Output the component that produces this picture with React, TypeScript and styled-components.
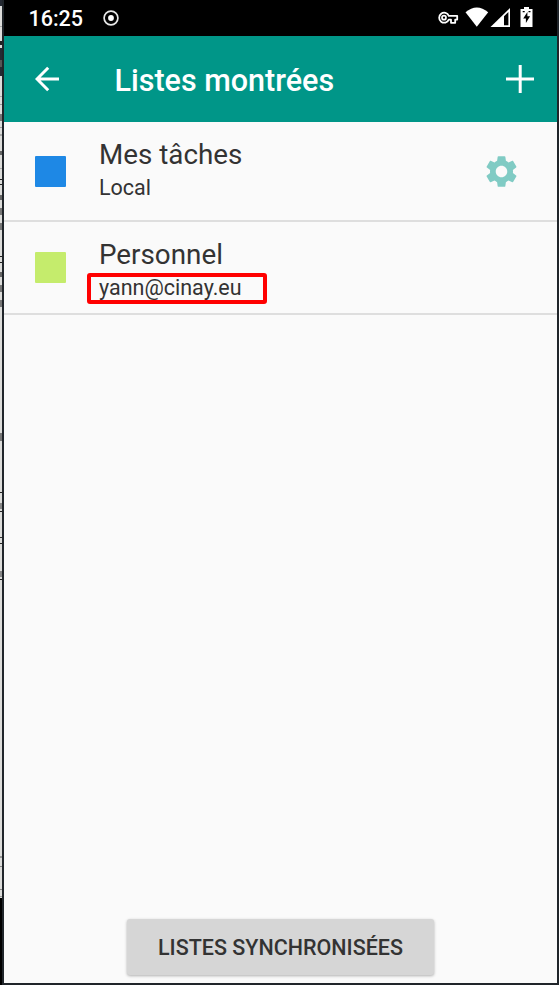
import React from "react";
import styled, { createGlobalStyle } from "styled-components";

const GlobalStyle = createGlobalStyle`
  *, *::before, *::after { box-sizing: border-box; }
  html, body, #root { margin: 0; height: 100%; }
  body { background: #20252a; overflow: hidden; font-family: Roboto, "Liberation Sans", sans-serif; }
`;

const Desktop = styled.div`
  display: flex;
  width: 559px;
  height: 985px;
  overflow: hidden;
  background: #20252a;
`;

const BackgroundEdge = styled.svg`
  flex: none;
  display: block;
  width: 2px;
  height: 985px;
`;

const Phone = styled.main`
  display: flex;
  flex-direction: column;
  width: 553px;
  height: 983px;
  margin-left: 2px;
  background: #fafafa;
`;

const StatusBar = styled.div`
  flex: none;
  display: flex;
  align-items: center;
  height: 36px;
  padding: 0 23px 0 24.5px;
  background: #000;
  color: #fff;
`;

const Clock = styled.span`
  width: 74.5px;
  font-size: 21.5px;
  font-weight: 500;
  line-height: 37px;
  white-space: nowrap;
`;

const StatusIcons = styled.svg`
  display: block;
  margin-left: auto;
`;

const AppBar = styled.header`
  flex: none;
  display: flex;
  align-items: center;
  height: 86px;
  padding: 0 23px 0 31px;
  background: #009688;
  color: #fff;
`;

const Title = styled.h1`
  margin: 3px 0 0 53.5px;
  font-size: 30.5px;
  font-weight: 500;
  line-height: 36px;
  white-space: nowrap;
`;

const IconButton = styled.button<{ $push?: boolean }>`
  flex: none;
  display: block;
  margin: 0 0 0 ${(p) => (p.$push ? "auto" : "0")};
  padding: 0;
  border: 0;
  background: none;
  color: inherit;
  svg { display: block; }
`;

const Lists = styled.ul`
  flex: 1;
  margin: 0;
  padding: 0;
  list-style: none;
`;

const ListRow = styled.li<{ $height: number }>`
  display: flex;
  align-items: center;
  height: ${(p) => p.$height}px;
  padding: 0 40px 0 31px;
  border-bottom: 2px solid #dedede;
  color: #333;
`;

const Swatch = styled.span<{ $color: string }>`
  flex: none;
  width: 30.5px;
  height: 31px;
  margin-right: 33.5px;
  border-radius: 1px;
  background: ${(p) => p.$color};
`;

const Labels = styled.div<{ $top: number }>`
  align-self: flex-start;
  display: flex;
  flex-direction: column;
  padding-top: ${(p) => p.$top}px;
`;

const ListName = styled.span`
  font-size: 27.8px;
  line-height: 36px;
  white-space: nowrap;
`;

const Account = styled.span<{ $marked?: boolean }>`
  width: ${(p) => (p.$marked ? "180px" : "auto")};
  height: 31px;
  margin-left: ${(p) => (p.$marked ? "-12px" : "0")};
  padding-left: ${(p) => (p.$marked ? "8px" : "0")};
  border: ${(p) => (p.$marked ? "4px solid #f00" : "0")};
  border-radius: 3px;
  font-size: 21.5px;
  line-height: ${(p) => (p.$marked ? "21px" : "30px")};
  white-space: nowrap;
`;

const Footer = styled.footer`
  flex: none;
  display: flex;
  justify-content: center;
  height: 64.5px;
`;

const SyncButton = styled.button`
  width: 306.5px;
  height: 56px;
  padding: 0;
  border: 0;
  border-radius: 3px;
  background: #d6d6d6;
  box-shadow: 0 1px 3px rgba(0, 0, 0, 0.3);
  color: #333;
  font-family: inherit;
  font-size: 21.5px;
  font-weight: 500;
  line-height: 57px;
  white-space: nowrap;
`;

const edgeMarks: Array<[number, number, string]> = [
  [26, 1, "#aaa"], [41, 4, "#222"], [60, 7, "#555"], [96, 1, "#aaa"], [104, 1, "#999"],
  [114, 7, "#777"], [127, 1, "#999"], [134, 2, "#aaa"], [151, 4, "#666"], [168, 1, "#aaa"],
  [179, 1, "#222"], [184, 1, "#222"], [195, 5, "#666"], [208, 7, "#777"], [223, 7, "#777"],
  [256, 1, "#222"], [262, 1, "#222"], [272, 5, "#666"], [285, 7, "#777"], [300, 7, "#777"],
  [433, 8, "#777"], [492, 1, "#222"], [503, 6, "#888"], [511, 1, "#222"], [537, 1, "#333"],
  [543, 1, "#222"], [571, 6, "#888"], [579, 1, "#222"], [856, 2, "#999"], [866, 1, "#888"],
  [889, 1, "#888"], [896, 1, "#999"],
];

const gearPath =
  "M19.14 12.94c.04-.3.06-.61.06-.94 0-.32-.02-.64-.07-.94l2.03-1.58c.18-.14.23-.41.12-.61l-1.92-3.32c-.12-.22-.37-.29-.59-.22l-2.39.96c-.5-.38-1.03-.7-1.62-.94l-.36-2.54c-.04-.24-.24-.41-.48-.41h-3.84c-.24 0-.43.17-.47.41l-.36 2.54c-.59.24-1.13.57-1.62.94l-2.39-.96c-.22-.08-.47 0-.59.22L2.74 8.87c-.12.21-.08.47.12.61l2.03 1.58c-.05.3-.09.63-.09.94s.02.64.07.94l-2.03 1.58c-.18.14-.23.41-.12.61l1.92 3.32c.12.22.37.29.59.22l2.39-.96c.5.38 1.03.7 1.62.94l.36 2.54c.05.24.24.41.48.41h3.84c.24 0 .44-.17.47-.41l.36-2.54c.59-.24 1.13-.56 1.62-.94l2.39.96c.22.08.47 0 .59-.22l1.92-3.32c.12-.22.07-.47-.12-.61l-2.01-1.58zM12 15.6c-1.98 0-3.6-1.62-3.6-3.6s1.62-3.6 3.6-3.6 3.6 1.62 3.6 3.6-1.62 3.6-3.6 3.6z";

const lists = [
  { name: "Mes tâches", account: "Local", color: "#1e88e5", height: 100, top: 15, marked: false, settings: true },
  { name: "Personnel", account: "yann@cinay.eu", color: "#c5ec6c", height: 93, top: 15, marked: true, settings: false },
];

export default function App() {
  return (
    <>
      <GlobalStyle />
      <Desktop>
        <BackgroundEdge viewBox="0 0 2 985" aria-hidden="true" shapeRendering="crispEdges">
          <rect width="2" height="985" fill="#dcdcda" />
          <rect width="2" height="6" fill="#252a33" />
          <rect y="48" width="2" height="28" fill="#252a33" />
          <rect y="898" width="2" height="87" fill="#000" />
          {edgeMarks.map(([y, h, fill]) => (
            <rect key={y} y={y} width="2" height={h} fill={fill} />
          ))}
        </BackgroundEdge>
        <Phone>
          <StatusBar>
            <Clock>16:25</Clock>
            <svg width="16" height="16" viewBox="0 0 16 16" aria-hidden="true">
              <circle cx="8" cy="8" r="6.9" fill="none" stroke="#e8e8e8" strokeWidth="1.7" />
              <circle cx="8" cy="8" r="2.9" fill="#fff" />
            </svg>
            <StatusIcons width="96" height="22" viewBox="438 7 96 22" aria-hidden="true">
              <path
                d="M448.8 15.8A5 5 0 1 0 448.8 19.6H451V22.8H455.2V19.6H457.2V15.8Z"
                fill="none"
                stroke="#fff"
                strokeWidth="1.8"
                strokeLinejoin="round"
              />
              <circle cx="444" cy="17.7" r="2" fill="none" stroke="#fff" strokeWidth="1.7" />
              <path d="M476.8 26.8 465.5 12.3Q476.8 2.7 488.2 12.3Z" fill="#fff" />
              <path d="M510 8V27H490.5Z" fill="#fff" />
              <path d="M504 16.2 508.4 12V25.2H504Z" fill="#000" />
              <path d="M524 7h5v2h3.5v18h-12V9h3.5z" fill="#fff" />
              <path d="m527.4 12-4.2 6.5h2.7v4.6l4.2-6.8h-2.7z" fill="#000" />
              <path d="M522.7 11h2v1.2h-2zM528.5 11h2v1.2h-2z" fill="#000" />
            </StatusIcons>
          </StatusBar>
          <AppBar>
            <IconButton aria-label="Retour">
              <svg width="26" height="26" viewBox="0 0 26 26" fill="none" stroke="currentColor" strokeWidth="3">
                <path d="M24 13H2M13.2 1.8 2 13l11.2 11.2" />
              </svg>
            </IconButton>
            <Title>Listes montrées</Title>
            <IconButton $push aria-label="Ajouter">
              <svg width="28" height="28" viewBox="0 0 28 28" fill="none" stroke="currentColor" strokeWidth="3">
                <path d="M14.2 0v28M0 14h28" />
              </svg>
            </IconButton>
          </AppBar>
          <Lists>
            {lists.map((list) => (
              <ListRow key={list.name} $height={list.height}>
                <Swatch $color={list.color} />
                <Labels $top={list.top}>
                  <ListName>{list.name}</ListName>
                  <Account $marked={list.marked}>{list.account}</Account>
                </Labels>
                {list.settings && (
                  <IconButton $push aria-label="Paramètres">
                    <svg width="31" height="31" viewBox="2.3 2.3 19.4 19.4" fill="#80cbc4">
                      <path d={gearPath} />
                    </svg>
                  </IconButton>
                )}
              </ListRow>
            ))}
          </Lists>
          <Footer>
            <SyncButton>LISTES SYNCHRONISÉES</SyncButton>
          </Footer>
        </Phone>
      </Desktop>
    </>
  );
}
